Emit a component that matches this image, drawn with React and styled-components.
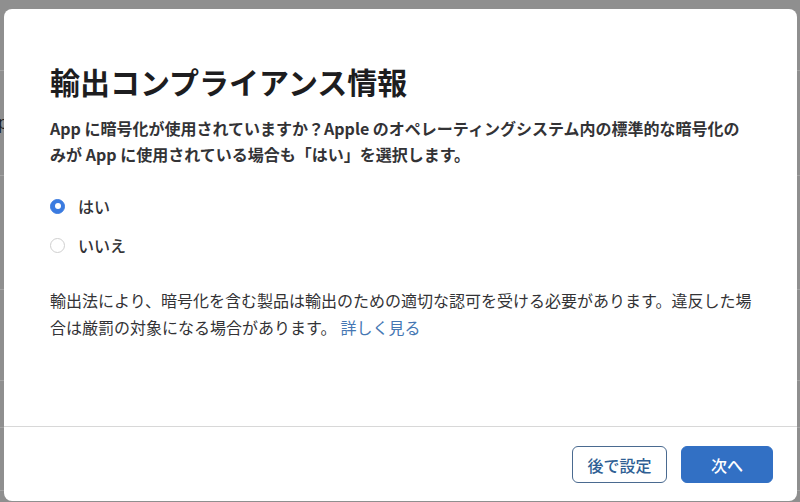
import React from "react";
import styled, { createGlobalStyle } from "styled-components";

const Global = createGlobalStyle`
  html, body { margin: 0; padding: 0; }
  body {
    width: 800px;
    height: 502px;
    overflow: hidden;
    font-family: "Noto Sans CJK JP", "Noto Sans", sans-serif;
    background: #8f8f8f;
  }
`;

const Page = styled.div`
  position: relative;
  width: 800px;
  height: 502px;
  overflow: hidden;
  background: #8f8f8f;
`;

const Backdrop = styled.div`
  display: flex;
  flex-direction: column;
`;

const BgRow = styled.div`
  height: ${(p) => p.$h}px;
  box-sizing: border-box;
  border-bottom: 1px solid #a3a3a3;
  display: flex;
  align-items: center;
  overflow: hidden;
`;

const BgText = styled.span`
  margin-left: -24px;
  font-size: 18px;
  color: #1c1c1c;
  font-family: "Liberation Sans", sans-serif;
`;

const Modal = styled.div`
  position: absolute;
  top: 9px;
  left: 4px;
  width: 793px;
  height: 492px;
  background: #ffffff;
  border-radius: 8px;
  display: flex;
  flex-direction: column;
  overflow: hidden;
`;

const Body = styled.div`
  flex: 1;
  padding: 52px 46px 0 46px;
  display: flex;
  flex-direction: column;
`;

const Title = styled.h1`
  margin: 0;
  font-size: 30px;
  line-height: 40px;
  font-weight: 700;
  color: #1d1d1f;
`;

const Lead = styled.p`
  margin: 14px 0 0 0;
  font-size: 16px;
  line-height: 26px;
  font-weight: 700;
  color: #333336;
  white-space: nowrap;
`;

const Options = styled.div`
  margin-top: 27px;
  display: flex;
  flex-direction: column;
  gap: 15px;
`;

const Option = styled.label`
  display: flex;
  align-items: center;
  gap: 13px;
  height: 24px;
  font-size: 16px;
  font-weight: 500;
  color: #333336;
`;

const Radio = styled.span`
  width: 15px;
  height: 15px;
  box-sizing: border-box;
  border-radius: 50%;
  display: flex;
  align-items: center;
  justify-content: center;
  background: ${(p) => (p.$checked ? "#3b7be0" : "#ffffff")};
  border: 1px solid ${(p) => (p.$checked ? "#3b7be0" : "#cfcfcf")};
  &::after {
    content: "";
    display: ${(p) => (p.$checked ? "block" : "none")};
    width: 6px;
    height: 6px;
    border-radius: 50%;
    background: #ffffff;
  }
`;

const Note = styled.p`
  margin: 30px 0 0 0;
  font-size: 16px;
  line-height: 27px;
  font-weight: 400;
  color: #333336;
  white-space: nowrap;
`;

const Link = styled.a`
  color: #4577b3;
  text-decoration: none;
  margin-left: 4px;
`;

const Footer = styled.div`
  border-top: 1px solid #d8d8d8;
  padding: 19px 24px 18px 0;
  display: flex;
  justify-content: flex-end;
  gap: 14px;
`;

const Button = styled.button`
  height: 37px;
  box-sizing: border-box;
  padding: 0;
  width: ${(p) => (p.$primary ? "92px" : "95px")};
  border-radius: 6px;
  font-family: "Noto Sans CJK JP", "Noto Sans", sans-serif;
  font-size: 16px;
  font-weight: 500;
  cursor: pointer;
  background: ${(p) => (p.$primary ? "#3270c4" : "#ffffff")};
  color: ${(p) => (p.$primary ? "#ffffff" : "#2f5f94")};
  border: 1px solid ${(p) => (p.$primary ? "#3270c4" : "#4a6a90")};
`;

export default function App() {
  return (
    <Page>
      <Global />
      <Backdrop>
        <BgRow $h={71} />
        <BgRow $h={105}>
          <BgText>App</BgText>
        </BgRow>
        <BgRow $h={114} />
        <BgRow $h={91} />
        <BgRow $h={47} />
        <BgRow $h={63} />
      </Backdrop>
      <Modal>
        <Body>
          <Title>輸出コンプライアンス情報</Title>
          <Lead>
            App に暗号化が使用されていますか？Apple のオペレーティングシステム内の標準的な暗号化の
            <br />
            みが App に使用されている場合も「はい」を選択します。
          </Lead>
          <Options>
            <Option>
              <Radio $checked />
              はい
            </Option>
            <Option>
              <Radio />
              いいえ
            </Option>
          </Options>
          <Note>
            輸出法により、暗号化を含む製品は輸出のための適切な認可を受ける必要があります。違反した場
            <br />
            合は厳罰の対象になる場合があります。
            <Link href="#">詳しく見る</Link>
          </Note>
        </Body>
        <Footer>
          <Button>後で設定</Button>
          <Button $primary>次へ</Button>
        </Footer>
      </Modal>
    </Page>
  );
}
